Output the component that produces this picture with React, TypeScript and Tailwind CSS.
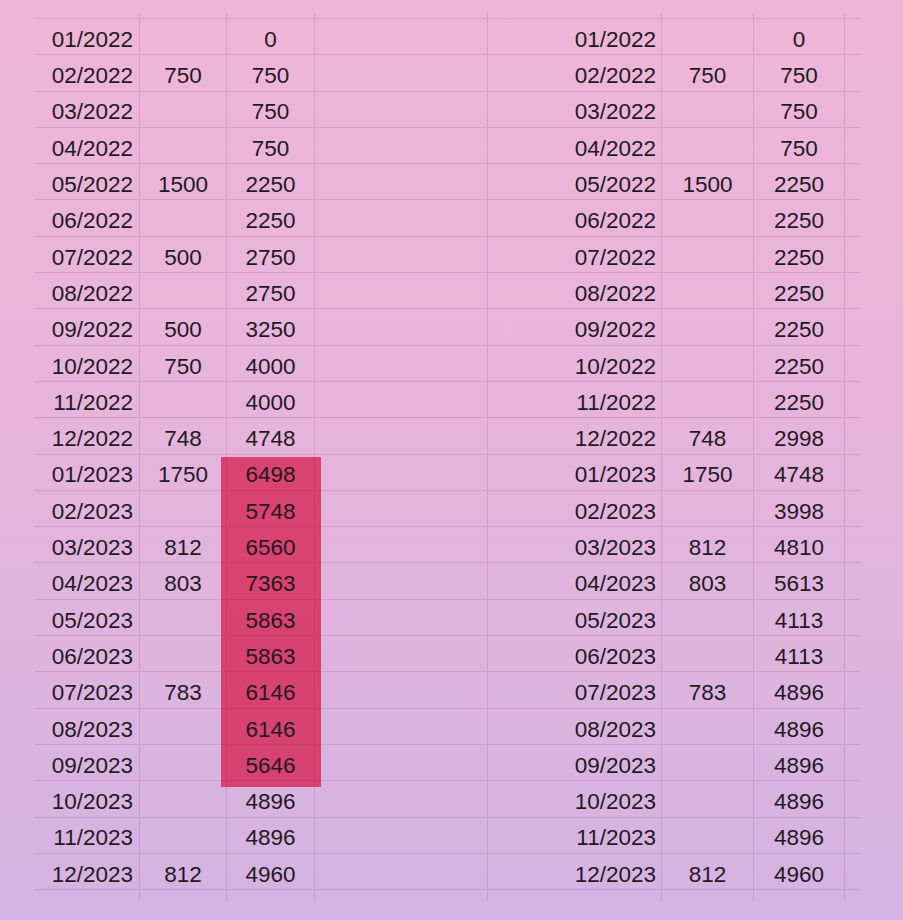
const left: [string, string, string][] = [
  ["01/2022", "", "0"],
  ["02/2022", "750", "750"],
  ["03/2022", "", "750"],
  ["04/2022", "", "750"],
  ["05/2022", "1500", "2250"],
  ["06/2022", "", "2250"],
  ["07/2022", "500", "2750"],
  ["08/2022", "", "2750"],
  ["09/2022", "500", "3250"],
  ["10/2022", "750", "4000"],
  ["11/2022", "", "4000"],
  ["12/2022", "748", "4748"],
  ["01/2023", "1750", "6498"],
  ["02/2023", "", "5748"],
  ["03/2023", "812", "6560"],
  ["04/2023", "803", "7363"],
  ["05/2023", "", "5863"],
  ["06/2023", "", "5863"],
  ["07/2023", "783", "6146"],
  ["08/2023", "", "6146"],
  ["09/2023", "", "5646"],
  ["10/2023", "", "4896"],
  ["11/2023", "", "4896"],
  ["12/2023", "812", "4960"],
]

const right: [string, string][] = [
  ["", "0"],
  ["750", "750"],
  ["", "750"],
  ["", "750"],
  ["1500", "2250"],
  ["", "2250"],
  ["", "2250"],
  ["", "2250"],
  ["", "2250"],
  ["", "2250"],
  ["", "2250"],
  ["748", "2998"],
  ["1750", "4748"],
  ["", "3998"],
  ["812", "4810"],
  ["803", "5613"],
  ["", "4113"],
  ["", "4113"],
  ["783", "4896"],
  ["", "4896"],
  ["", "4896"],
  ["", "4896"],
  ["", "4896"],
  ["812", "4960"],
]

const cols = "grid grid-cols-[106px_87px_88px_173px_174px_92px_91px_15px]"
const line = "border-[rgba(120,50,100,0.17)]"

function Spacer({ h }: { h: string }) {
  return (
    <div className={`${cols} ${h}`}>
      {Array.from({ length: 7 }).map((_, i) => (
        <div key={i} className={`border-r ${line}`} />
      ))}
      <div />
    </div>
  )
}

export default function App() {
  return (
    <div
      className="min-h-screen bg-gradient-to-b from-[#efb5d7] via-[#e5b4dc] to-[#d4b3e2] pt-[13px] pl-[34px] text-[#1f1a1f] text-[22.5px]"
      style={{ fontFamily: '"Liberation Sans", Arial, sans-serif' }}
    >
      <div className="relative w-[826px]">
        {/* highlighted block sits behind the numbers */}
        <div className="absolute left-[187px] top-[444px] w-[100px] h-[330px] bg-[rgba(214,22,70,0.72)]" />
        <Spacer h="h-[5px]" />
        <div className={`relative border-t ${line}`}>
          {left.map((r, i) => (
            <div key={r[0]} className={`${cols} h-[36.3px] border-b ${line} leading-none`}>
              <div className={`border-r ${line} flex items-center justify-end pr-[6px] pt-[7px]`}>{r[0]}</div>
              <div className={`border-r ${line} flex items-center justify-center pt-[7px]`}>{r[1]}</div>
              <div className={`border-r ${line} flex items-center justify-center pt-[7px]`}>{r[2]}</div>
              <div className={`border-r ${line}`} />
              <div className={`border-r ${line} flex items-center justify-end pr-[5px] pt-[7px]`}>{r[0]}</div>
              <div className={`border-r ${line} flex items-center justify-center pt-[7px]`}>{right[i][0]}</div>
              <div className={`border-r ${line} flex items-center justify-center pt-[7px]`}>{right[i][1]}</div>
              <div />
            </div>
          ))}
        </div>
        <Spacer h="h-[11px]" />
      </div>
    </div>
  )
}
